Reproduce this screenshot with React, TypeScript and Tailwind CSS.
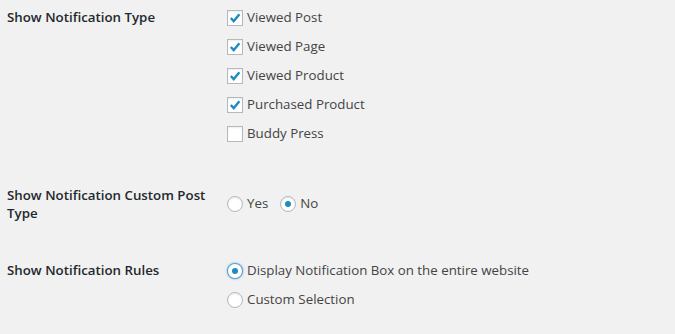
const Checkbox = ({ checked }: { checked: boolean }) => (
  <span className="w-4 h-4 border border-[#b4b9be] bg-white shadow-[inset_0_1px_2px_rgba(0,0,0,0.07)] flex items-center justify-center shrink-0">
    {checked && (
      <svg viewBox="0 0 16 16" className="w-4 h-4">
        <path d="M3.2 8 L6.5 11.6 L13 3.6" fill="none" stroke="#1e8cbe" strokeWidth="2.8" strokeLinecap="butt" strokeLinejoin="miter" />
      </svg>
    )}
  </span>
);

const Radio = ({ checked, focused }: { checked: boolean; focused?: boolean }) => (
  <span
    className={`w-4 h-4 rounded-full border bg-white flex items-center justify-center shrink-0 ${
      focused
        ? 'border-[#5b9dd9] shadow-[0_0_2px_rgba(30,140,190,0.8)]'
        : 'border-[#b4b9be] shadow-[inset_0_1px_2px_rgba(0,0,0,0.1)]'
    }`}
  >
    {checked && <span className="w-[6px] h-[6px] rounded-full bg-[#1e8cbe]" />}
  </span>
);

const notificationTypes = [
  { label: 'Viewed Post', checked: true },
  { label: 'Viewed Page', checked: true },
  { label: 'Viewed Product', checked: true },
  { label: 'Purchased Product', checked: true },
  { label: 'Buddy Press', checked: false },
];

export default function App() {
  return (
    <div
      className="w-[675px] h-[334px] bg-[#f1f1f1] pl-[7px] text-[13.3px] text-[#444] overflow-hidden"
      style={{ fontFamily: '"Open Sans", "Noto Sans", sans-serif' }}
    >
      {/* notification type */}
      <div className="flex pt-[3px]">
        <div className="w-[220px] h-[29px] flex items-center font-semibold text-[#23282d]">
          Show Notification Type
        </div>
        <div className="flex flex-col">
          {notificationTypes.map((t) => (
            <label key={t.label} className="h-[29px] flex items-center gap-[4px]">
              <Checkbox checked={t.checked} />
              <span>{t.label}</span>
            </label>
          ))}
        </div>
      </div>

      {/* custom post type */}
      <div className="flex mt-[38px]">
        <div className="w-[220px] leading-[18px] font-semibold text-[#23282d]">
          Show Notification Custom Post Type
        </div>
        <div className="h-[36px] flex items-center">
          <label className="flex items-center gap-[4px] mr-[12px]">
            <Radio checked={false} />
            <span>Yes</span>
          </label>
          <label className="flex items-center gap-[4px]">
            <Radio checked />
            <span>No</span>
          </label>
        </div>
      </div>

      {/* rules */}
      <div className="flex mt-[34px]">
        <div className="w-[220px] h-[29px] flex items-center font-semibold text-[#23282d]">
          Show Notification Rules
        </div>
        <div className="flex flex-col">
          <label className="h-[29px] flex items-center gap-[4px]">
            <Radio checked focused />
            <span>Display Notification Box on the entire website</span>
          </label>
          <label className="h-[29px] flex items-center gap-[4px]">
            <Radio checked={false} />
            <span>Custom Selection</span>
          </label>
        </div>
      </div>
    </div>
  );
}
